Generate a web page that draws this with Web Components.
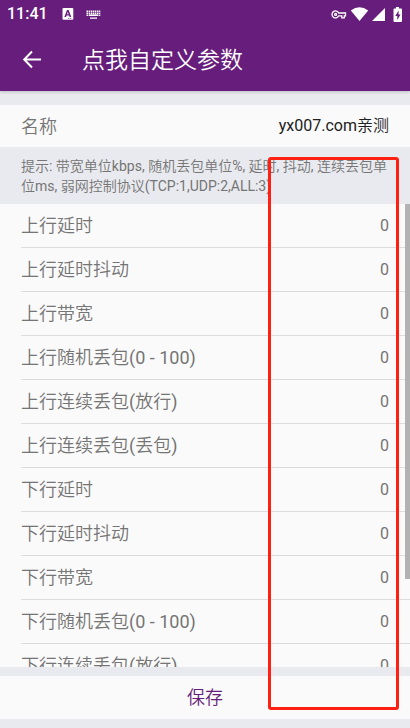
<!DOCTYPE html>
<html lang="zh-CN">
<head>
<meta charset="utf-8">
<meta name="viewport" content="width=device-width, initial-scale=1">
<title>点我自定义参数</title>
<style>
html, body { margin: 0; height: 100%; }
body { font-family: Roboto, "Noto Sans CJK SC DemiLight", "Noto Sans CJK SC", sans-serif; font-weight: 400; background: #e9eaef; color: #757575; }
</style>
</head>
<body>
<settings-page></settings-page>
<script>
const define = (name, html, setup) => {
  const template = document.createElement('template');
  template.innerHTML = html;
  customElements.define(name, class extends HTMLElement {
    constructor() {
      super();
      this.attachShadow({ mode: 'open' }).append(template.content.cloneNode(true));
    }
    connectedCallback() { if (setup) setup(this, this.shadowRoot); }
  });
};

define('status-bar', `
<style>
:host { display: flex; align-items: center; justify-content: space-between; height: 28px; padding: 0 7px; color: #fff; }
div { display: flex; align-items: center; }
time { font-size: 16px; line-height: 28px; font-weight: 500; margin-right: 14px; }
svg { display: block; fill: currentColor; }
.left svg + svg { margin-left: 12px; }
.right { gap: 3px; }
.right .battery { margin-left: 5px; }
</style>
<div class="left">
  <time>11:41</time>
  <svg width="12" height="12" viewBox="0 0 12 12" aria-hidden="true"><path fill-rule="evenodd" d="M1.5 0h8.7Q11.3 0 11.3 1v9.8q0 1-1 1H1.5q-1 0-1-1V1q0-1 1-1ZM5 2 2.3 9H4l.5-1.4h2.6L7.6 9h1.7L6.6 2Zm.8 2 .8 2.3H5ZM6.3 10.2v.8h1v-.8Zm2 0v.8h1v-.8Z"/></svg>
  <svg width="15" height="9" viewBox="0 0 15 9" aria-hidden="true"><path fill="none" stroke="currentColor" stroke-width="1.5" stroke-dasharray="1.5 .6" d="M.5 1.3h13.8M.5 3.3h13.8M.5 5.3h13.8"/><path d="M3.5 4.6h8v1.5h-8zM4 7.5h7v1.2H4z"/></svg>
</div>
<div class="right">
  <svg width="16" height="9" viewBox="0 0 16 9" aria-hidden="true"><g fill="none" stroke="currentColor" stroke-width="1.3"><path d="M7.7 3h6.8v2.8h-1.2v2h-2.5v-2H7.7A3.5 3.5 0 1 1 7.7 3Z"/><circle cx="4.6" cy="4.4" r="1"/></g></svg>
  <svg width="19" height="14" viewBox="0 0 19 14" aria-hidden="true"><path d="M.8 3.5Q9.5-3 18.2 3.5L9.5 14Z"/></svg>
  <svg width="13" height="14" viewBox="0 0 13 14" aria-hidden="true"><path d="M13 1v13H0Z"/></svg>
  <svg class="battery" width="10" height="15" viewBox="0 0 10 15" aria-hidden="true"><path d="M3 0h3v1.5h2q1 0 1 1V14q0 1-1 1H1.5q-1 0-1-1V2.5q0-1 1-1H3Z"/><path fill="#671d7b" d="M5.6 3.5 2.3 9h2v4L7.5 7.6h-1.9Z"/></svg>
</div>`);

define('app-bar', `
<style>
:host { display: block; position: relative; z-index: 1; background: #671d7b; color: #fff; box-shadow: 0 1px 3px #0003; }
header { display: flex; align-items: center; height: 63px; padding: 0 21px; gap: 39px; }
button { display: block; padding: 0; border: 0; background: none; color: inherit; }
svg { display: block; }
h1 { margin: 0; padding-top: 2px; font-size: 23px; line-height: 32px; font-weight: inherit; }
</style>
<status-bar></status-bar>
<header>
  <button type="button" aria-label="返回"><svg width="22" height="22" viewBox="0 0 22 22" fill="none" stroke="currentColor" stroke-width="2"><path d="M20 10.5H3M11 2.5 3.2 10.5l7.8 8"/></svg></button>
  <h1><slot></slot></h1>
</header>`);

define('param-row', `
<style>
:host { display: block; flex: none; padding: 0 0 0 21px; background: #fafafa; }
div { display: flex; align-items: center; height: 43px; border-bottom: 1px solid #dcdcdc; padding-right: 21px; }
:host([plain]) div { height: 42px; border: 0; }
label { flex: none; padding-top: 1px; font-size: 18px; line-height: 26px; }
input { flex: 1; min-width: 0; box-sizing: border-box; height: 24px; margin: 0; padding: 0; border: 0; outline: 0; background: none; font: inherit; font-size: 16px; line-height: 24px; color: inherit; text-align: right; }
:host([plain]) input { color: #212121; }
</style>
<div><label for="value"></label><input id="value" type="text"></div>`,
(host, root) => {
  root.querySelector('label').textContent = host.getAttribute('label');
  root.querySelector('input').value = host.getAttribute('value');
});

define('param-list', `
<style>
:host { display: block; position: relative; flex: 1; min-height: 0; background: #fafafa; }
.scroll { height: 100%; overflow-y: auto; scrollbar-width: none; }
.thumb { position: absolute; top: 0; right: 0; width: 5px; height: 81%; background: #b2b2b2; }
</style>
<div class="scroll"><slot></slot></div>
<div class="thumb"></div>`);

define('hint-text', `
<style>
:host { display: block; padding: 9px 21px 8px; font-size: 14px; line-height: 20px; }
p { margin: 0; }
</style>
<p><slot></slot></p>`);

define('save-button', `
<style>
:host { display: block; margin: 9px 0; }
button { display: block; width: 100%; height: 43px; padding: 0; border: 0; background: #fafafa; color: #671d7b; font: inherit; font-size: 18px; line-height: 26px; }
</style>
<button type="button"><slot></slot></button>`);

define('highlight-frame', `
<style>
:host { position: absolute; z-index: 2; top: 157px; bottom: 18px; right: 11px; width: 32%; box-sizing: border-box; border: 3px solid #ff2014; border-radius: 3px; pointer-events: none; }
</style>`);

define('settings-page', `
<style>
:host { display: flex; flex-direction: column; position: relative; height: 100vh; overflow: hidden; }
.name { margin-top: 14px; }
</style>
<app-bar>点我自定义参数</app-bar>
<param-row class="name" plain label="名称" value="yx007.com亲测"></param-row>
<hint-text>提示: 带宽单位kbps, 随机丢包单位%, 延时, 抖动, 连续丢包单位ms, 弱网控制协议(TCP:1,UDP:2,ALL:3)</hint-text>
<param-list>
  <param-row label="上行延时" value="0"></param-row>
  <param-row label="上行延时抖动" value="0"></param-row>
  <param-row label="上行带宽" value="0"></param-row>
  <param-row label="上行随机丢包(0 - 100)" value="0"></param-row>
  <param-row label="上行连续丢包(放行)" value="0"></param-row>
  <param-row label="上行连续丢包(丢包)" value="0"></param-row>
  <param-row label="下行延时" value="0"></param-row>
  <param-row label="下行延时抖动" value="0"></param-row>
  <param-row label="下行带宽" value="0"></param-row>
  <param-row label="下行随机丢包(0 - 100)" value="0"></param-row>
  <param-row label="下行连续丢包(放行)" value="0"></param-row>
</param-list>
<save-button>保存</save-button>
<highlight-frame></highlight-frame>`);
</script>
</body>
</html>
